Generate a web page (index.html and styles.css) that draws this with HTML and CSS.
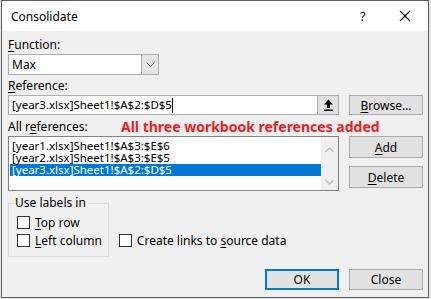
FILE: index.html
```html
<!DOCTYPE html>
<html lang="en">
<head>
  <meta charset="UTF-8" />
  <title>Consolidate</title>
  <link rel="stylesheet" href="styles.css">
</head>
<body>
  <div class="dialog">
    <div class="titlebar">
      <span class="title">Consolidate</span>
      <span class="help">?</span>
      <span class="close-x">
        <svg width="12" height="12" viewBox="0 0 12 12"><path d="M1 1 L11 11 M11 1 L1 11" stroke="#000" stroke-width="1.1" fill="none"/></svg>
      </span>
    </div>

    <div class="content">
      <label class="lbl"><u>F</u>unction:</label>
      <div class="select">
        <span class="select-value">Max</span>
        <span class="select-btn">
          <svg width="9" height="6" viewBox="0 0 9 6"><path d="M0.5 0.5 L4.5 4.5 L8.5 0.5" stroke="#777" fill="none"/></svg>
        </span>
      </div>

      <label class="lbl ref-lbl"><u>R</u>eference:</label>
      <div class="row ref-row">
        <div class="ref-input">
          <span class="ref-text">[year3.xlsx]Sheet1!$A$2:$D$5</span><span class="caret"></span>
          <span class="collapse-btn">
            <svg width="11" height="12" viewBox="0 0 11 12"><path d="M5.5 0.5 L10 5.5 L7 5.5 L7 9 L4 9 L4 5.5 L1 5.5 Z" fill="#000"/><rect x="1" y="10.5" width="9" height="1.5" fill="#000"/></svg>
          </span>
        </div>
        <button class="btn"><u>B</u>rowse...</button>
      </div>

      <div class="row list-head">
        <span class="lbl">All r<u>e</u>ferences:</span>
        <span class="note">All three workbook references added</span>
      </div>

      <div class="row list-row">
        <div class="listbox">
          <ul class="items">
            <li>[year1.xlsx]Sheet1!$A$3:$E$6</li>
            <li>[year2.xlsx]Sheet1!$A$3:$E$5</li>
            <li class="selected">[year3.xlsx]Sheet1!$A$2:$D$5</li>
          </ul>
          <div class="scrollbar">
            <svg width="9" height="6" viewBox="0 0 9 6"><path d="M0.5 5 L4.5 1 L8.5 5" stroke="#c2c2c2" stroke-width="1.5" fill="none"/></svg>
            <svg width="9" height="6" viewBox="0 0 9 6"><path d="M0.5 1 L4.5 5 L8.5 1" stroke="#c2c2c2" stroke-width="1.5" fill="none"/></svg>
          </div>
        </div>
        <div class="side-btns">
          <button class="btn"><u>A</u>dd</button>
          <button class="btn"><u>D</u>elete</button>
        </div>
      </div>

      <div class="row options">
        <fieldset class="group">
          <legend>Use labels in</legend>
          <label class="check"><span class="box"></span><span><u>T</u>op row</span></label>
          <label class="check"><span class="box"></span><span><u>L</u>eft column</span></label>
        </fieldset>
        <label class="check links"><span class="box"></span><span>Create links to <u>s</u>ource data</span></label>
      </div>

      <div class="row footer">
        <button class="btn default">OK</button>
        <button class="btn">Close</button>
      </div>
    </div>
  </div>
</body>
</html>
```

FILE: styles.css
```css
body {
  margin: 0;
  padding: 0 0 0 1px;
  background: #e6e6e6;
  font-family: 'Noto Sans', 'Open Sans', sans-serif;
  font-size: 12px;
  color: #000;
}

u {
  text-decoration: underline;
  text-underline-offset: 2px;
}

.dialog {
  width: 426px;
  height: 296px;
  border: 1px solid #5c5c5c;
  background: #f0f0f0;
}

.titlebar {
  height: 30px;
  background: #fff;
  display: flex;
  align-items: center;
}

.title {
  flex: 1;
  padding-left: 9px;
  font-size: 12px;
}

.help {
  width: 14px;
  margin-right: 25px;
  font-size: 13px;
}

.close-x {
  width: 12px;
  margin-right: 17px;
  display: flex;
}

.content {
  padding: 0 5px 0 6px;
}

.lbl {
  display: block;
  line-height: 16px;
}

.content > .lbl:first-child {
  padding-top: 6px;
}

.select {
  margin-top: 1px;
  width: 149px;
  height: 19px;
  border: 1px solid #adadad;
  background: #fff;
  display: flex;
}

.select-value {
  flex: 1;
  padding-left: 3px;
  line-height: 19px;
}

.select-btn {
  width: 16px;
  background: #e5e5e5;
  border-left: 1px solid #adadad;
  display: flex;
  align-items: center;
  justify-content: center;
}

.ref-lbl {
  margin-top: 3px;
}

.row {
  display: flex;
  gap: 10px;
}

.ref-row {
  margin-top: 1px;
}

.ref-input {
  width: 329px;
  height: 18px;
  border: 1px solid #adadad;
  background: #fff;
  display: flex;
  align-items: center;
}

.ref-text {
  padding-left: 3px;
  line-height: 18px;
  font-size: 11.5px;
}

.caret {
  width: 1px;
  height: 15px;
  background: #000;
}

.collapse-btn {
  margin-left: auto;
  width: 20px;
  height: 18px;
  background: #e1e1e1;
  border-left: 1px solid #adadad;
  display: flex;
  align-items: center;
  justify-content: center;
}

.btn {
  width: 74px;
  height: 21px;
  padding: 0;
  background: #e1e1e1;
  border: 1px solid #adadad;
  font-family: inherit;
  font-size: 12px;
  color: #000;
}

.ref-row .btn {
  height: 20px;
}

.list-head {
  margin-top: 4px;
  gap: 0;
  align-items: flex-end;
}

.list-head .lbl {
  width: 113px;
}

.note {
  color: #ee1c24;
  font-weight: bold;
  font-size: 14px;
  line-height: 16px;
}

.list-row {
  margin-top: 1px;
}

.listbox {
  width: 329px;
  height: 53px;
  border: 1px solid #828282;
  background: #fff;
  display: flex;
}

.items {
  list-style: none;
  margin: 0;
  padding: 3px 0 0 1px;
  flex: 1;
}

.items li {
  height: 12px;
  line-height: 12px;
  padding-left: 2px;
  font-size: 11.5px;
}

.items li.selected {
  background: #0078d7;
  color: #fff;
}

.scrollbar {
  width: 17px;
  display: flex;
  flex-direction: column;
  justify-content: space-between;
  align-items: center;
  padding: 10px 0 5px;
  background: #f0f0f0;
}

.side-btns {
  display: flex;
  flex-direction: column;
  gap: 8px;
}

.side-btns .btn {
  height: 22px;
}

.options {
  margin-top: 5px;
  gap: 10px;
  align-items: flex-end;
}

.group {
  margin: 0;
  width: 83px;
  padding: 3px 6px 7px 8px;
  border: 1px solid #dcdcdc;
}

.group legend {
  padding: 0 2px 0 1px;
  margin-left: -3px;
  line-height: 14px;
}

.check {
  display: flex;
  align-items: center;
  gap: 5px;
  height: 18px;
  white-space: nowrap;
}

.box {
  width: 11px;
  height: 11px;
  border: 1px solid #333;
  background: #fff;
}

.links {
  margin-bottom: 8px;
}

.footer {
  margin-top: 12px;
  justify-content: flex-end;
}

.btn.default {
  border: 2px solid #0078d7;
}
```
